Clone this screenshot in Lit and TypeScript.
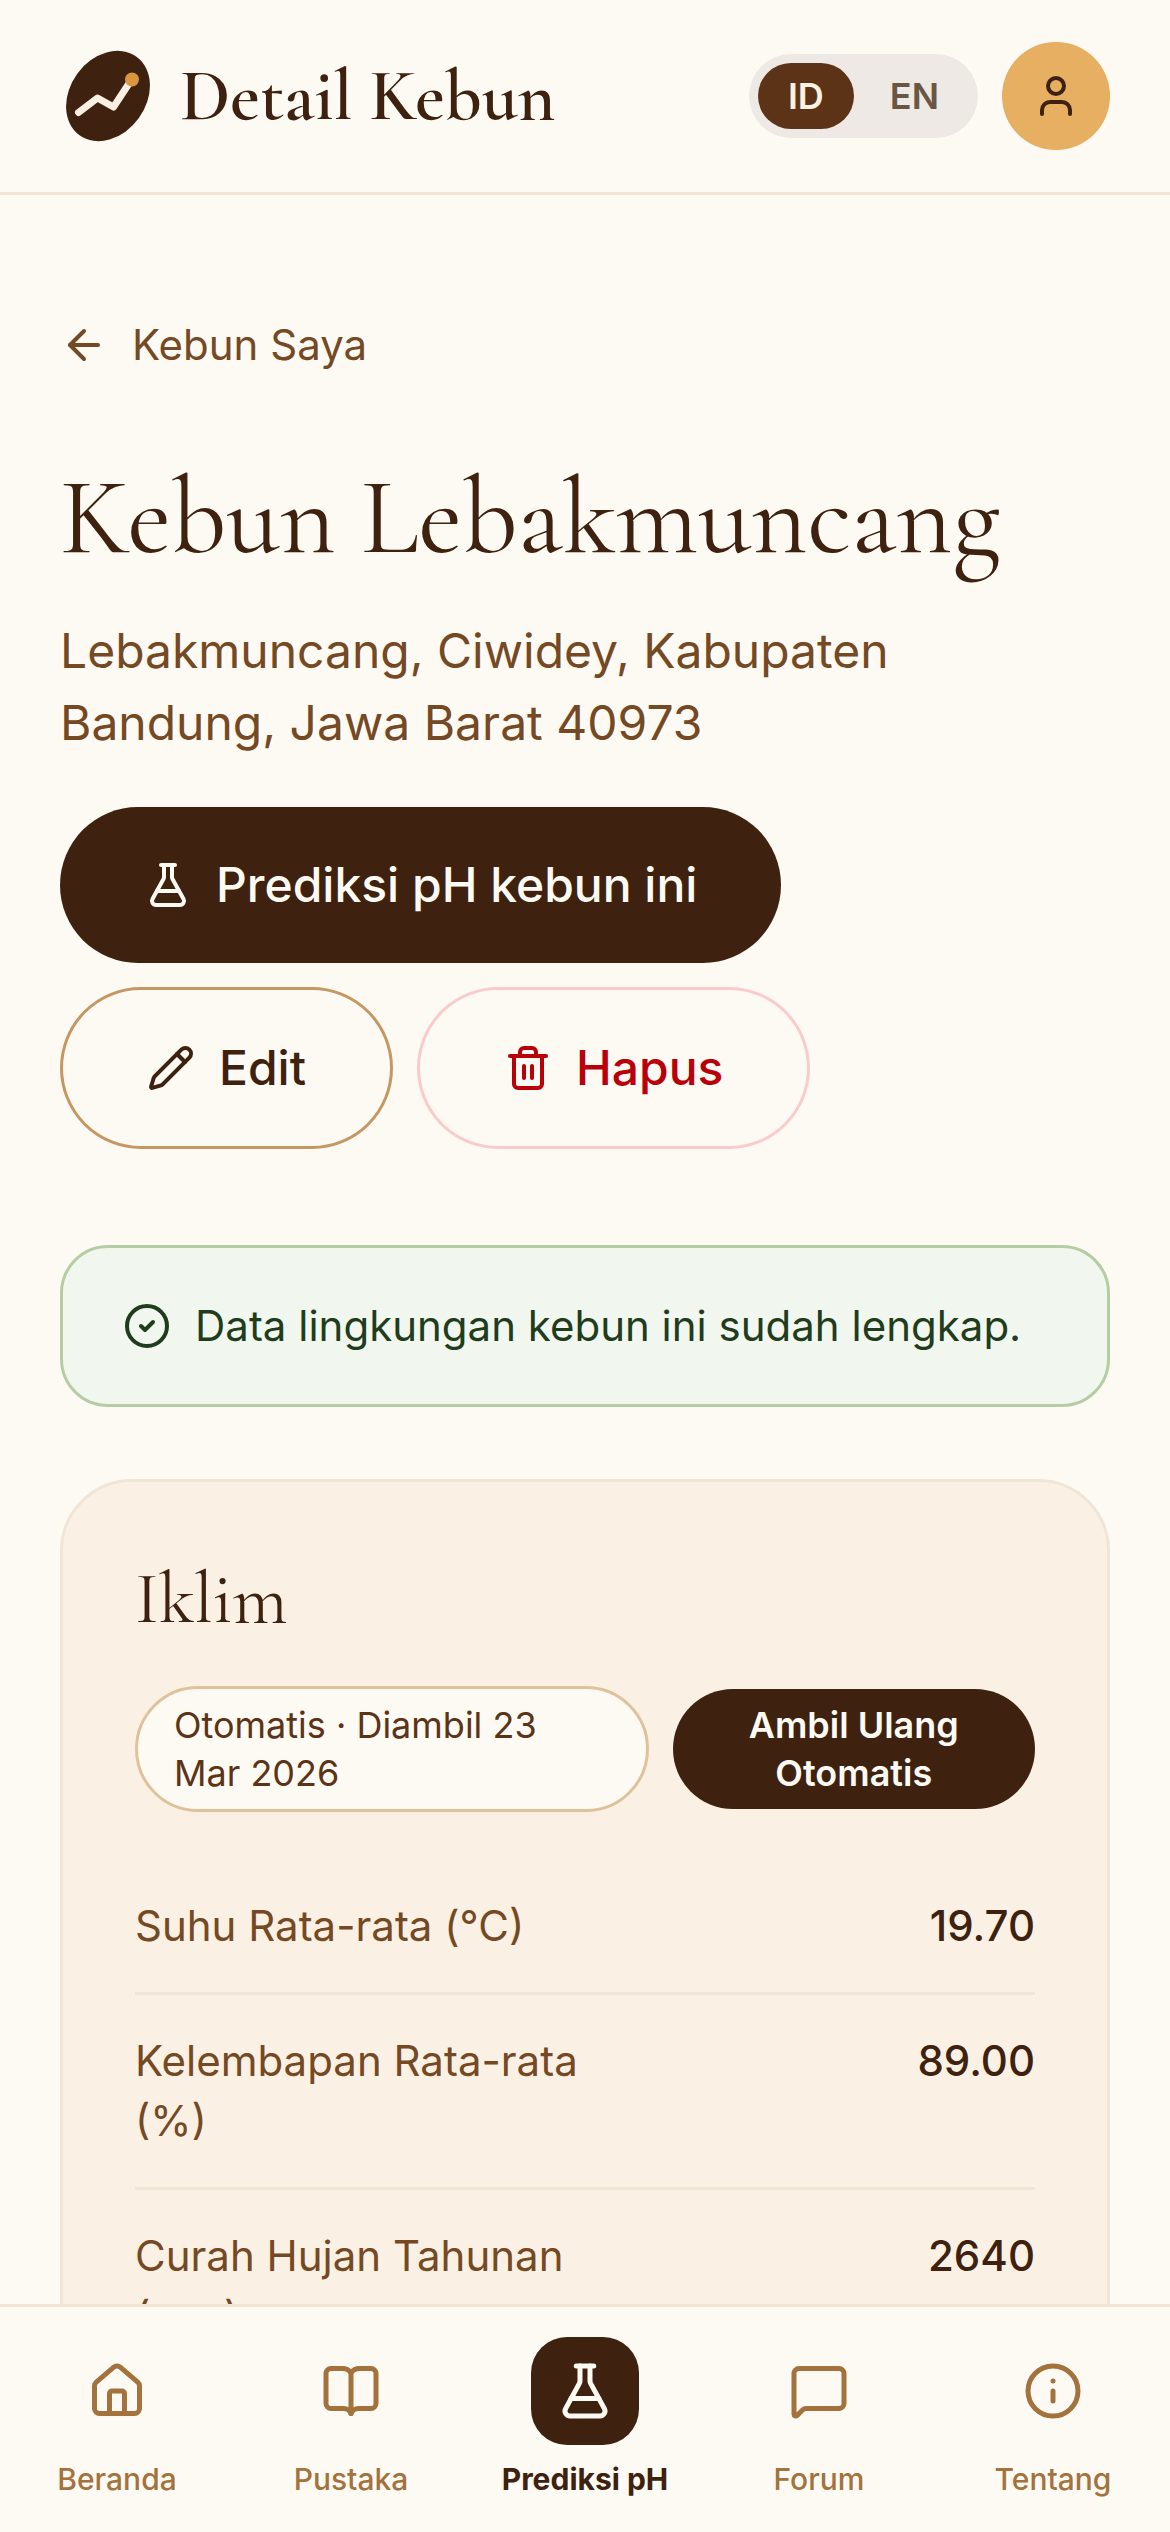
import { LitElement, html, css, svg, type SVGTemplateResult } from "lit";
import { customElement, property, state } from "lit/decorators.js";
import { classMap } from "lit/directives/class-map.js";

const ICONS: Record<string, SVGTemplateResult> = {
  user: svg`<path d="M19 21v-2a4 4 0 0 0-4-4H9a4 4 0 0 0-4 4v2"/><circle cx="12" cy="7" r="4"/>`,
  back: svg`<path d="m12 19-7-7 7-7"/><path d="M19 12H5"/>`,
  flask: svg`<path d="M14 2v6a2 2 0 0 0 .245.96l5.51 10.08A2 2 0 0 1 18 22H6a2 2 0 0 1-1.755-2.96l5.51-10.08A2 2 0 0 0 10 8V2"/><path d="M6.453 15h11.094"/><path d="M8.5 2h7"/>`,
  pencil: svg`<path d="M21.174 6.812a1 1 0 0 0-3.986-3.987L3.842 16.174a2 2 0 0 0-.5.83l-1.321 4.352a.5.5 0 0 0 .623.622l4.353-1.32a2 2 0 0 0 .83-.497z"/><path d="m15 5 4 4"/>`,
  trash: svg`<path d="M10 11v6"/><path d="M14 11v6"/><path d="M19 6v14a2 2 0 0 1-2 2H7a2 2 0 0 1-2-2V6"/><path d="M3 6h18"/><path d="M8 6V4a2 2 0 0 1 2-2h4a2 2 0 0 1 2 2v2"/>`,
  check: svg`<circle cx="12" cy="12" r="10"/><path d="m9 12 2 2 4-4"/>`,
  home: svg`<path d="M15 21v-8a1 1 0 0 0-1-1h-4a1 1 0 0 0-1 1v8"/><path d="M3 10a2 2 0 0 1 .709-1.528l7-5.999a2 2 0 0 1 2.582 0l7 5.999A2 2 0 0 1 21 10v9a2 2 0 0 1-2 2H5a2 2 0 0 1-2-2z"/>`,
  book: svg`<path d="M12 4.700V21"/><path d="M4 3h4.500c1.500 0 2.700.6 3.500 1.700.8-1.100 2-1.700 3.500-1.700H20a2 2 0 0 1 2 2v12a2 2 0 0 1-2 2h-5c-1.500 0-2.500.7-3 2-.5-1.300-1.500-2-3-2H4a2 2 0 0 1-2-2V5a2 2 0 0 1 2-2z"/>`,
  chat: svg`<path d="M22 17a2 2 0 0 1-2 2H6.828a2 2 0 0 0-1.414.586l-2.202 2.202A.71.71 0 0 1 2 21.286V5a2 2 0 0 1 2-2h16a2 2 0 0 1 2 2z"/>`,
  info: svg`<circle cx="12" cy="12" r="10"/><path d="M12 16v-4"/><path d="M12 8h.01"/>`,
};

@customElement("line-icon")
export class LineIcon extends LitElement {
  @property() name = "info";

  static styles = css`
    :host { display: block; flex: none; width: 48px; height: 48px; }
    .glyph { display: block; width: 100%; height: 100%; fill: none; stroke: currentColor; stroke-width: 2; stroke-linecap: round; stroke-linejoin: round; }
  `;

  render() {
    return html`<svg class="glyph" viewBox="0 0 24 24" aria-hidden="true">${ICONS[this.name]}</svg>`;
  }
}

const CLIMATE = [
  { label: "Suhu Rata-rata (°C)", value: "19.70" },
  { label: "Kelembapan Rata-rata (%)", value: "89.00" },
  { label: "Curah Hujan Tahunan (mm)", value: "2640" },
];

const TABS = [
  { icon: "home", label: "Beranda" },
  { icon: "book", label: "Pustaka" },
  { icon: "flask", label: "Prediksi pH" },
  { icon: "chat", label: "Forum" },
  { icon: "info", label: "Tentang" },
];

@customElement("app-root")
export class AppRoot extends LitElement {
  @state() private lang = "ID";
  @state() private tab = "Prediksi pH";

  static styles = css`
    :host {
      --ink: #3e220f;
      --brown: #754923;
      --line: #f1e6d6;
      --page: #fdfaf4;
      display: flex;
      flex-direction: column;
      height: 100vh;
      overflow: hidden;
      background: var(--page);
      color: var(--ink);
      font-family: Inter, "Liberation Sans", sans-serif;
      font-size: 42px;
      line-height: 60px;
    }
    * { box-sizing: border-box; }
    h1, h2, p, dl, dd { margin: 0; }
    h1, h2, .title { font-family: "Cormorant Garamond", "Liberation Serif", serif; font-weight: 400; }
    button { font: inherit; color: inherit; border: 0; margin: 0; background: none; cursor: pointer; }
    a { color: inherit; text-decoration: none; }

    .header { flex: none; display: flex; align-items: center; justify-content: space-between; padding: 42px 60px; border-bottom: 3px solid var(--line); }
    .brand { display: flex; align-items: center; gap: 24px; }
    .logo { display: block; width: 96px; height: 96px; }
    .title { font-size: 72px; line-height: 90px; font-weight: 600; }
    .tools { display: flex; align-items: center; gap: 24px; }
    .langs { display: flex; gap: 6px; padding: 9px; border-radius: 42px; background: #eee9e4; }
    .lang { padding: 9px 30px; border-radius: 33px; font-size: 36px; line-height: 48px; font-weight: 600; color: #6b5644; }
    .lang.on { background: #5c3317; color: #fdf1e3; }
    .avatar { display: grid; place-items: center; width: 108px; height: 108px; padding: 0; border-radius: 50%; background: #e6af62; }

    .main { flex: 1; min-height: 0; overflow-y: auto; scrollbar-width: none; padding: 120px 60px 96px; }
    .back { display: flex; width: fit-content; align-items: center; gap: 24px; color: var(--brown); }
    .name { margin-top: 75px; font-size: 108px; line-height: 135px; }
    .address { margin-top: 30px; font-size: 48px; line-height: 72px; color: var(--brown); }
    .actions { display: flex; flex-wrap: wrap; gap: 24px; margin-top: 48px; }
    .action { display: flex; align-items: center; gap: 24px; padding: 42px 84px; border-radius: 81px; font-size: 48px; line-height: 72px; font-weight: 500; }
    .primary { background: var(--ink); color: var(--page); }
    .edit { border: 3px solid #c49763; }
    .delete { border: 3px solid #fbcaca; color: #b90009; }
    .notice { display: flex; align-items: center; gap: 24px; margin-top: 96px; padding: 48px 60px; border: 3px solid #b6cda3; border-radius: 48px; background: #f1f6ee; color: #1f3d1c; }

    .card { margin-top: 72px; padding: 72px; border: 3px solid var(--line); border-radius: 72px; background: #faf1e4; }
    .section { font-size: 72px; line-height: 90px; }
    .source { display: grid; grid-template-columns: 17fr 12fr; align-items: center; gap: 24px; margin: 42px 0 48px; font-size: 36px; line-height: 48px; }
    .chip { padding: 12px 36px; border: 3px solid #dfc29b; border-radius: 63px; background: var(--page); color: #5c3317; }
    .refresh { padding: 12px 48px; border-radius: 60px; background: var(--ink); color: var(--page); font-weight: 600; }
    .row { display: grid; grid-template-columns: 1fr 1fr; padding: 36px 0; border-bottom: 3px solid var(--line); }
    .row:last-child { border-bottom: 0; }
    .label { color: var(--brown); }
    .value { text-align: right; font-weight: 500; }

    .nav { flex: none; display: grid; grid-template-columns: repeat(5, 1fr); padding: 30px 0; border-top: 3px solid var(--line); }
    .tab { display: flex; flex-direction: column; align-items: center; gap: 12px; font-size: 30px; line-height: 45px; font-weight: 500; color: #a3723d; }
    .tile { display: grid; place-items: center; width: 108px; height: 108px; border-radius: 36px; }
    .tab-icon { width: 60px; height: 60px; }
    .tab.on { color: var(--ink); font-weight: 700; }
    .tab.on .tile { background: var(--ink); color: var(--page); }
  `;

  render() {
    return html`
      <header class="header">
        <div class="brand">
          <svg class="logo" viewBox="0 0 96 96" aria-hidden="true">
            <ellipse cx="48" cy="48" rx="38" ry="48.500" transform="rotate(36 48 48)" fill="#3e220f"/>
            <path d="M18.500 64.500 37.500 50 53.500 59 70 34" fill="none" stroke="#fbeee3" stroke-width="7" stroke-linecap="round" stroke-linejoin="round"/>
            <circle cx="72" cy="31.500" r="7" fill="#d9963f"/>
          </svg>
          <span class="title">Detail Kebun</span>
        </div>
        <div class="tools">
          <div class="langs" role="group" aria-label="Bahasa">
            ${["ID", "EN"].map((code) => html`
              <button class=${classMap({ lang: true, on: this.lang === code })} aria-pressed=${this.lang === code ? "true" : "false"} @click=${() => (this.lang = code)}>${code}</button>`)}
          </div>
          <button class="avatar" aria-label="Profil"><line-icon name="user"></line-icon></button>
        </div>
      </header>

      <main class="main">
        <a class="back" href="#kebun"><line-icon name="back"></line-icon>Kebun Saya</a>
        <h1 class="name">Kebun Lebakmuncang</h1>
        <p class="address">Lebakmuncang, Ciwidey, Kabupaten Bandung, Jawa Barat 40973</p>
        <div class="actions">
          <button class="action primary"><line-icon name="flask"></line-icon>Prediksi pH kebun ini</button>
          <button class="action edit"><line-icon name="pencil"></line-icon>Edit</button>
          <button class="action delete"><line-icon name="trash"></line-icon>Hapus</button>
        </div>
        <div class="notice" role="status"><line-icon name="check"></line-icon><p>Data lingkungan kebun ini sudah lengkap.</p></div>

        <section class="card">
          <h2 class="section">Iklim</h2>
          <div class="source">
            <span class="chip">Otomatis · Diambil 23 Mar 2026</span>
            <button class="refresh">Ambil Ulang Otomatis</button>
          </div>
          <dl>
            ${CLIMATE.map((item) => html`
              <div class="row"><dt class="label">${item.label}</dt><dd class="value">${item.value}</dd></div>`)}
          </dl>
        </section>
      </main>

      <nav class="nav">
        ${TABS.map((item) => html`
          <a class=${classMap({ tab: true, on: this.tab === item.label })} href="#${item.icon}" @click=${() => (this.tab = item.label)}>
            <span class="tile"><line-icon class="tab-icon" name=${item.icon}></line-icon></span>
            <span>${item.label}</span>
          </a>`)}
      </nav>
    `;
  }
}
